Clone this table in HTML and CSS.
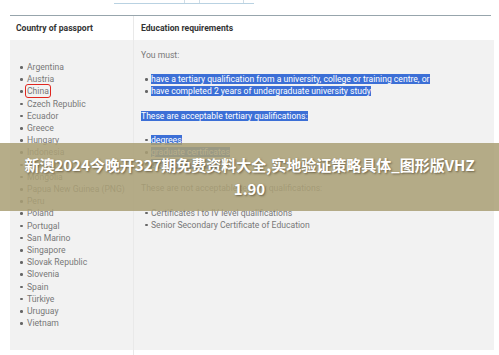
FILE: index.html
```html
<!DOCTYPE html>
<html>
<head>
<meta charset="utf-8">
<link rel="stylesheet" href="styles.css">
</head>
<body>
<div class="page">
  <div class="topbar">
    <div class="tabline"><span class="tick t1"></span><span class="tick t2"></span><span class="tick t3"></span></div>
  </div>
  <div class="rule"></div>
  <div class="table">
    <div class="cell head left">Country of passport</div>
    <div class="cell head right">Education requirements</div>
    <div class="cell body left">
      <ul class="list countries">
        <li>Argentina</li>
        <li>Austria</li>
        <li><span class="boxed">China</span></li>
        <li>Czech Republic</li>
        <li>Ecuador</li>
        <li>Greece</li>
        <li>Hungary</li>
        <li>Indonesia</li>
        <li>Malaysia</li>
        <li>Mongolia</li>
        <li>Papua New Guinea (PNG)</li>
        <li>Peru</li>
        <li>Poland</li>
        <li>Portugal</li>
        <li>San Marino</li>
        <li>Singapore</li>
        <li>Slovak Republic</li>
        <li>Slovenia</li>
        <li>Spain</li>
        <li>Türkiye</li>
        <li>Uruguay</li>
        <li>Vietnam</li>
      </ul>
    </div>
    <div class="cell body right">
      <p class="para">You must:</p>
      <ul class="list req">
        <li><span class="sel">have a tertiary qualification from a university, college or training centre, or</span></li>
        <li><span class="sel">have completed 2 years of undergraduate university study</span></li>
      </ul>
      <p class="para"><span class="sel">These are acceptable tertiary qualifications:</span></p>
      <ul class="list req">
        <li><span class="sel">degrees</span></li>
        <li><span class="sel">graduate certificates</span></li>
        <li><span class="sel">graduate diplomas</span></li>
      </ul>
      <p class="para">These are not acceptable tertiary qualifications:</p>
      <ul class="list req">
        <li>Certificates I to IV level qualifications</li>
        <li>Senior Secondary Certificate of Education</li>
      </ul>
    </div>
    <div class="cell foot left"></div>
    <div class="cell foot right"></div>
  </div>
  <div class="banner"><div class="banner-text">新澳2024今晚开327期免费资料大全,实地验证策略具体_图形版VHZ1.90</div></div>
</div>
</body>
</html>
```

FILE: styles.css
```css
html, body {
  margin: 0;
  padding: 0;
  background: #ffffff;
}
.page {
  position: relative;
  width: 499px;
  height: 355px;
  overflow: hidden;
  font-family: Roboto, "Liberation Sans", Arial, sans-serif;
}
.topbar {
  height: 15px;
  padding-left: 114px;
  box-sizing: border-box;
}
.tabline {
  position: relative;
  width: 140px;
  height: 3px;
  border-bottom: 1px solid #b9d2e2;
}
.tick {
  position: absolute;
  top: 0;
  width: 1px;
  height: 3px;
  background: #cfdde6;
}
.t1 { left: 70px; }
.t2 { left: 85px; }
.t3 { left: 129px; }
.rule {
  margin-left: 10px;
  width: 481px;
  height: 0;
  border-top: 1px solid #97a5ac;
}
.table {
  display: grid;
  grid-template-columns: 124px 360px;
  grid-template-rows: 24px 310px 5px;
  margin-left: 10px;
}
.cell {
  box-sizing: border-box;
}
.cell.left {
  border-right: 1px solid #e9e9e9;
}
.head {
  background: #ffffff;
  font-weight: 700;
  font-size: 8.6px;
  color: #333333;
  display: flex;
  align-items: center;
}
.head.left { padding-left: 6px; }
.head.right { padding-left: 7px; }
.body {
  background: #f2f2f2;
  font-size: 8.6px;
  color: #787878;
  line-height: 12.2px;
}
.body.left { padding: 21px 0 0 0; }
.body.right { padding: 9px 0 0 7px; }
.foot { background: #ffffff; }
.list {
  list-style: none;
  margin: 0;
  padding: 0;
}
.list li {
  position: relative;
  white-space: nowrap;
}
.list li::before {
  content: "";
  position: absolute;
  top: 5px;
  width: 2.5px;
  height: 2.5px;
  border-radius: 50%;
  background: #666666;
}
.countries li { padding-left: 17px; }
.countries li::before { left: 10px; }
.req li { padding-left: 10px; }
.req li::before { left: 4px; }
.req { margin-bottom: 12px; }
.para {
  margin: 0 0 12px 0;
  white-space: nowrap;
}
.sel {
  background: #3c6fd6;
  color: #ffffff;
}
.boxed {
  outline: 1.5px solid #e0261f;
  outline-offset: 1px;
  border-radius: 1px;
}
.banner {
  position: absolute;
  left: 0;
  top: 143px;
  width: 499px;
  height: 68px;
  background: rgba(170, 160, 118, 0.86);
  display: flex;
  align-items: center;
  justify-content: center;
  box-sizing: border-box;
  padding: 0 22px;
}
.banner-text {
  font-family: "Noto Sans CJK SC", "Noto Sans", sans-serif;
  font-weight: 700;
  font-size: 15px;
  line-height: 24px;
  color: #ffffff;
  text-align: center;
  word-break: break-all;
  text-shadow: 1px 1px 2px rgba(60, 50, 30, 0.6);
}
```
